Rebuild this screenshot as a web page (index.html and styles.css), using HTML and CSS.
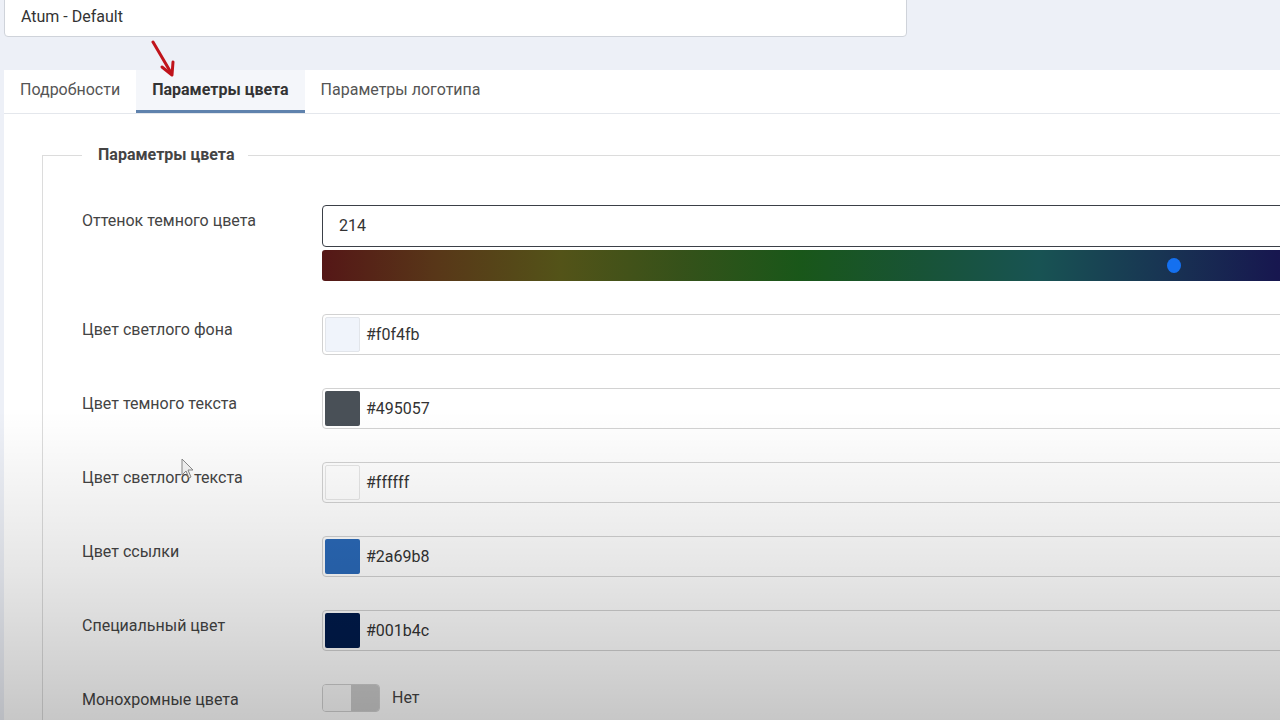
FILE: index.html
```html
<!DOCTYPE html>
<html lang="ru">
<head>
  <meta charset="UTF-8">
  <meta name="viewport" content="width=device-width, initial-scale=1.0">
  <link rel="stylesheet" href="styles.css">
  <title>Atum - Default</title>
</head>
<body>

  <div id="page_wrap">

    <div class="style_title">Atum - Default</div>

    <ul class="tab_list">
      <li class="tab">Подробности</li>
      <li class="tab active">Параметры цвета</li>
      <li class="tab">Параметры логотипа</li>
    </ul>

    <section class="tab_content">
      <fieldset class="options">
        <legend>Параметры цвета</legend>

        <div class="row">
          <label class="row_label">Оттенок темного цвета</label>
          <div class="control">
            <div class="hue_input">214</div>
            <div class="hue_bar"><span class="hue_dot"></span></div>
          </div>
        </div>

        <div class="row">
          <label class="row_label">Цвет светлого фона</label>
          <div class="control color_field"><span class="swatch sw_light"></span>#f0f4fb</div>
        </div>

        <div class="row">
          <label class="row_label">Цвет темного текста</label>
          <div class="control color_field"><span class="swatch sw_dark"></span>#495057</div>
        </div>

        <div class="row">
          <label class="row_label">Цвет светлого текста</label>
          <div class="control color_field"><span class="swatch sw_white"></span>#ffffff</div>
        </div>

        <div class="row">
          <label class="row_label">Цвет ссылки</label>
          <div class="control color_field"><span class="swatch sw_link"></span>#2a69b8</div>
        </div>

        <div class="row">
          <label class="row_label">Специальный цвет</label>
          <div class="control color_field"><span class="swatch sw_special"></span>#001b4c</div>
        </div>

        <div class="row">
          <label class="row_label">Монохромные цвета</label>
          <div class="control switch_wrap">
            <span class="switch"><span class="switch_off"></span><span class="switch_on"></span></span>
            <span class="switch_text">Нет</span>
          </div>
        </div>

      </fieldset>
    </section>

  </div>

  <!-- пометка на видео: стрелка и курсор -->
  <svg class="mark_arrow" width="30" height="40" viewBox="0 0 30 40">
    <path d="M3 2 L20 31" stroke="#c0141b" stroke-width="3" stroke-linecap="round" fill="none"/>
    <path d="M12 27 L22 35 L23 22" stroke="#c0141b" stroke-width="3" stroke-linecap="round" stroke-linejoin="round" fill="none"/>
  </svg>

  <svg class="mark_cursor" width="14" height="22" viewBox="0 0 14 22">
    <path d="M1 1 L1 17 L5 13 L8 20 L10 19 L7 12 L12 12 Z" fill="#f4f4f4" stroke="#8a8a8a" stroke-width="1"/>
  </svg>

  <div class="shade"></div>

</body>
</html>
```

FILE: styles.css
```css
body,ul,li,fieldset,legend{
  margin:0px; padding:0px; list-style:none;
}

body{
  background:#edf0f7; overflow:hidden; height:720px;
  font-family:Roboto, "Noto Sans", sans-serif; font-size:16px; color:#444;
}

#page_wrap{
  padding-left:4px;
}

.style_title{
  width:903px; height:42px; margin-top:-5px; margin-bottom:33px; box-sizing:border-box;
  background:#fff; border:1px solid #cfd3da; border-radius:0px 0px 4px 4px;
  padding:11px 0px 0px 16px; color:#333;
}

.tab_list{
  display:flex; height:43px; background:#fff; border-bottom:1px solid #e4e7ec;
}

.tab{
  padding:0px 16px; line-height:40px; color:#555; border-bottom:3px solid transparent;
}

.tab.active{
  background:#f4f6fa; color:#333; font-weight:bold; border-bottom-color:#5f82ad;
}

.tab_content{
  background:#fff; height:620px; padding:31px 0px 0px 38px;
}

.options{
  width:1400px; border:1px solid #dcdcdc; border-right:none; border-bottom:none;
  padding:40px 0px 0px 39px; min-width:0px;
}

.options legend{
  padding:0px 14px 0px 16px; font-weight:bold; color:#444; line-height:20px;
}

.row{
  display:flex; margin-bottom:33px;
}

.row_label{
  width:240px; flex-shrink:0; padding-top:6px; line-height:20px; color:#444;
}

.control{
  flex:1;
}

.hue_input{
  height:42px; box-sizing:border-box; border:1px solid #3b4048; border-radius:4px;
  padding-left:16px; line-height:40px; color:#333; background:#fff;
}

.hue_bar{
  position:relative; height:31px; margin-top:3px; border-radius:3px;
  background:linear-gradient(to right, hsl(0,58%,21%), hsl(30,57%,22%), hsl(60,55%,21%), hsl(90,52%,21%), hsl(120,55%,22%), hsl(150,55%,21%), hsl(180,55%,21%), hsl(210,55%,21%), hsl(240,55%,20%), hsl(270,55%,21%), hsl(300,55%,21%), hsl(330,55%,21%), hsl(360,58%,21%));
  background-size:1433px 100%; background-repeat:no-repeat;
}

.hue_dot{
  position:absolute; left:845px; top:8px; width:14px; height:15px; border-radius:50%; background:#1470f0;
}

.color_field{
  display:flex; align-items:center; height:41px; box-sizing:border-box;
  border:1px solid #d2d2d2; border-radius:4px; background:#fff; color:#333;
}

.swatch{
  width:35px; height:35px; margin:0px 6px 0px 2px; border-radius:2px; box-sizing:border-box;
}

.sw_light{ background:#f0f4fb; border:1px solid #e2e5ea; }
.sw_dark{ background:#495057; }
.sw_white{ background:#fff; border:1px solid #e6e6e6; }
.sw_link{ background:#2a69b8; }
.sw_special{ background:#001b4c; }

.switch_wrap{
  display:flex; align-items:center; height:28px;
}

.switch{
  display:flex; width:58px; height:28px; box-sizing:border-box; border:1px solid #d0d0d0; border-radius:4px; overflow:hidden;
}

.switch_off{ flex:1; background:#fafafa; }
.switch_on{ flex:1; background:#cacaca; }

.switch_text{
  margin-left:12px; color:#444; position:relative; top:-1px;
}

.mark_arrow{
  position:absolute; left:150px; top:40px;
}

.mark_cursor{
  position:absolute; left:181px; top:458px;
}

.shade{
  position:absolute; left:0px; top:0px; width:100%; height:720px; pointer-events:none;
  background:linear-gradient(to bottom, rgba(0,0,0,0) 0%, rgba(0,0,0,0) 57%, rgba(0,0,0,0.04) 66%, rgba(0,0,0,0.1) 80%, rgba(0,0,0,0.22) 100%);
}
```
